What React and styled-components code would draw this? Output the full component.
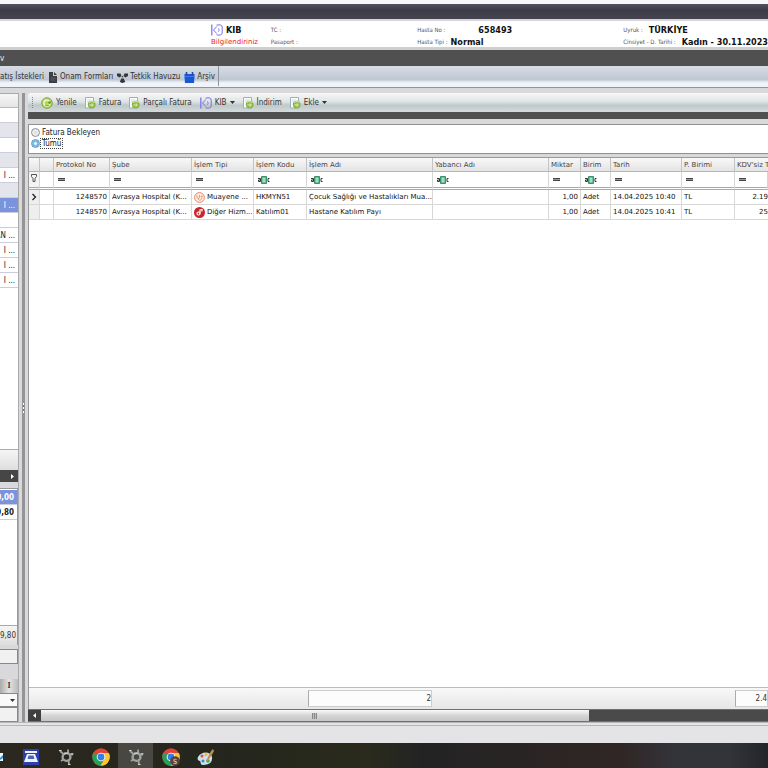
import React from "react";
import styled, { createGlobalStyle } from "styled-components";

const GlobalStyle = createGlobalStyle`
  * {
    box-sizing: border-box;
  }

  body {
    margin: 0;
    overflow-x: hidden;
    background: #e3e3e5;
    color: #333;
    font-family: "DejaVu Sans Condensed", "Noto Sans", sans-serif;
    font-size: 8px;
    line-height: 12px;
  }

  button,
  input,
  select {
    margin: 0;
    padding: 0;
    border: 0;
    background: none;
    color: inherit;
    font: inherit;
  }
`;

const Page = styled.div`
  display: flex;
  flex-direction: column;
  min-height: 100vh;
  overflow: hidden;
`;

const TitleBar = styled.div`
  height: 21px;
  border-top: 4px solid #f8f8fb;
  border-bottom: 2px solid #d8d3dd;
  background: linear-gradient(to bottom, #52525d, #3c3c48 40%, #45454f);
`;

const PatientBar = styled.header`
  display: grid;
  grid-template-columns: 60fr 147fr 207fr 143fr;
  height: 29px;
  padding: 3px 0 0 211px;
  overflow: hidden;
  background: #fff;
  border-bottom: 3px solid #cfcfcf;
`;

const PatientCell = styled.div`
  display: flex;
  flex-direction: column;
  white-space: nowrap;
`;

const PatientLine = styled.div`
  display: flex;
  align-items: center;
  gap: ${(props) => props.$gap || "3px"};
  height: 12px;
`;

const PatientLabel = styled.span`
  color: #555;
  font-size: 6px;
`;

const PatientValue = styled.strong`
  color: #111;
  font-size: 9px;
`;

const Notice = styled.span`
  color: #f0141e;
  font-family: "DejaVu Sans", sans-serif;
  font-size: 7px;
`;

const DarkBar = styled.div`
  height: 16px;
  background: #505050;
  color: #eee;
  line-height: 17px;
`;

const TabStrip = styled.nav`
  height: 22px;
  background: linear-gradient(to bottom, #d8dde4, #c0c7d2 65%, #f0f5fb 80%, #eef3f9);
  border-bottom: 1px solid #8f959d;
`;

const ToolButton = styled.button`
  display: flex;
  align-items: center;
  gap: 3px;
  white-space: nowrap;

  svg {
    flex: none;
  }
`;

const Tabs = styled.div`
  display: inline-flex;
  align-items: center;
  gap: 4px;
  height: 20px;
  padding: 2px 3px 0 0;
  border-right: 1px solid #8d939c;

  ${ToolButton} {
    gap: 2px;
  }
`;

const Body = styled.div`
  display: flex;
  flex: 1;
  padding-top: 5px;
  background: #d9d9db;
`;

const Side = styled.aside`
  display: flex;
  flex-direction: column;
  width: 19px;
  overflow: hidden;
  border-right: 1px solid #aaa;
`;

const SideHead = styled.div`
  height: 15px;
  background: linear-gradient(to bottom, #f7f7f7, #e4e4e4);
  border-top: 1px solid #aaa;
  border-bottom: 1px solid #bbb;
`;

const SideRow = styled.div`
  display: flex;
  justify-content: flex-end;
  height: 15px;
  overflow: hidden;
  background: ${(props) => props.$background || "#fff"};
  border-bottom: 1px solid #ccd;
  color: ${(props) => (props.$selected ? "#fff" : "#222")};
  font-weight: ${(props) => (props.$bold ? "bold" : "normal")};
  line-height: 15px;
  padding-right: 3px;
  white-space: nowrap;
`;

const SideList = styled.div`
  flex: 1;
  background: #fff;
`;

const SideFoot = styled.div`
  height: ${(props) => props.$height};
  background: linear-gradient(to bottom, #f5f5f5, #dedede);
  border-top: 1px solid #aaa;
  line-height: 20px;
  text-align: right;
  padding-right: 3px;
`;

const SideScroll = styled.button`
  display: flex;
  align-items: center;
  justify-content: flex-end;
  width: 100%;
  height: 12px;
  padding-right: 3px;
  background: #464646;
`;

const Totals = styled.div`
  height: 157px;
  margin-top: 6px;
  padding-top: 1px;
  border-top: 1px solid #999;
  border-right: 1px solid #999;
  background: #fff;
  display: flex;
  flex-direction: column;
`;

const SideBox = styled.div`
  height: 15px;
  border: solid #888;
  border-width: 1px 1px 1px 0;
  background: #f1f1f1;
`;

const SideForm = styled.div`
  padding-top: 4px;
`;

const SideButton = styled.button`
  display: block;
  width: 100%;
  height: 14px;
  margin-top: 15px;
  background: linear-gradient(to right, #aaa, #e4e4e4 50%, #bbb);
  font-family: "Liberation Serif", serif;
  font-weight: bold;
`;

const SideSelect = styled.select`
  display: block;
  appearance: none;
  width: 100%;
  height: 14px;
  border: solid #888;
  border-width: 1px 1px 1px 0;
  border-radius: 0;
  background: #fafafa;
`;

const SelectWrap = styled.div`
  position: relative;

  svg {
    position: absolute;
    right: 3px;
    top: 5px;
    pointer-events: none;
  }
`;

const Splitter = styled.div`
  display: flex;
  align-items: center;
  width: 3px;
  margin: 0 3px;
  background: #949496;

  &::after {
    content: "";
    width: 1px;
    height: 10px;
    margin: 0 1px;
    background: repeating-linear-gradient(to bottom, #fff 0 2px, #777 2px 4px);
  }
`;

const Main = styled.main`
  display: flex;
  flex: 1;
  flex-direction: column;
  min-width: 0;
`;

const Toolbar = styled.div`
  display: flex;
  align-items: center;
  gap: 8px;
  height: 19px;
  padding-left: 4px;
  border-radius: 3px 0 0 0;
  background: linear-gradient(to bottom, #f8f8f8, #dfe4e4 45%, #bfc9ca 65%, #d5dadb);
`;

const Grip = styled.div`
  width: 1px;
  height: 11px;
  border-left: 1px dotted #888;
`;

const Strip = styled.div`
  height: 7px;
  margin-bottom: 5px;
  background: #505050;
`;

const FilterBox = styled.fieldset`
  display: flex;
  flex-direction: column;
  margin: 0 0 3px;
  padding: 2px 2px 4px;
  border: solid #909090;
  border-width: 1px 0 1px 1px;
  background: #fff;
`;

const RadioLabel = styled.label`
  display: flex;
  align-items: center;
  height: 11px;
  color: #222;

  span {
    padding: 0 1px;
    border: 1px ${(props) => (props.$focused ? "dotted #444" : "solid transparent")};
    line-height: 9px;
  }
`;

const Radio = styled.input`
  appearance: none;
  width: 9px;
  height: 9px;
  border: 1px solid #8a8f93;
  border-radius: 50%;
  background: radial-gradient(#ddd, #fafafa);

  &:checked {
    border-color: #5b9bc8;
    background: radial-gradient(#f4fbff 15%, #70b6e2 45%, #b8e0f5);
  }
`;

const GridArea = styled.section`
  display: flex;
  flex: 1;
  flex-direction: column;
  overflow: hidden;
  border: solid #999;
  border-width: 1px 0 0 1px;
  background: #fff;
`;

const Table = styled.table`
  width: 100%;
  table-layout: fixed;
  border-collapse: separate;
  border-spacing: 0;
  font-family: "DejaVu Sans", sans-serif;
  font-size: 7px;
`;

const HeadCell = styled.th`
  height: 14px;
  padding: 0 0 0 2px;
  overflow: hidden;
  background: linear-gradient(to bottom, #f8f8f8, #e4e4e4);
  border-right: 1px solid #c4c4c4;
  border-bottom: 1px solid #b5b5b5;
  color: #444;
  font-weight: normal;
  text-align: left;
  white-space: nowrap;

  &:last-child {
    border-right: 0;
  }
`;

const FilterCell = styled.td`
  height: 18px;
  padding: 0 4px;
  border-right: 1px solid #d5d5d5;
  border-bottom: 3px double #aaa;

  &:first-child {
    padding: 0 2px;
    background: #f3f3f3;
  }

  button {
    display: flex;
  }
`;

const Cell = styled.td`
  height: 15px;
  padding: ${(props) => (props.$align === "right" ? "0 2px 0 0" : "0 0 0 2px")};
  overflow: hidden;
  border-right: 1px solid #d8d8d8;
  border-bottom: 1px solid #d8d8d8;
  color: #111;
  text-align: ${(props) => props.$align || "left"};
  white-space: nowrap;

  &:first-child {
    background: #eee;
  }

  &:last-child {
    padding: 0;
    border-right: 0;
  }

  svg {
    display: block;
    flex: none;
  }
`;

const TypeTag = styled.div`
  display: flex;
  align-items: center;
  gap: 2px;
`;

const Summary = styled.div`
  display: flex;
  height: 22px;
  margin-top: auto;
  padding: 2px 0;
  background: linear-gradient(to bottom, #f8f8f8, #e6e6e6);
  border-top: 1px solid #bbb;
`;

const SummaryBox = styled.output`
  width: ${(props) => props.$width};
  margin-left: ${(props) => props.$offset};
  border: 1px solid #ccc;
  border-left-color: #aaa;
  background: #fcfcfc;
  line-height: 16px;
  text-align: right;
`;

const ScrollBar = styled.div`
  display: flex;
  height: 13px;
  background: #4a4a4a;
  border: solid #70706e;
  border-width: 1px 0;
`;

const ScrollArrow = styled.button`
  display: flex;
  align-items: center;
  justify-content: center;
  width: 13px;
  background: #3f3f3f;
`;

const ScrollThumb = styled.div`
  display: flex;
  align-items: center;
  justify-content: center;
  width: 74%;
  background: linear-gradient(to bottom, #fafafa, #d5d5d5 50%, #c5c5c5);

  &::after {
    content: "";
    width: 5px;
    height: 6px;
    background: repeating-linear-gradient(to right, #888 0 1px, #bbb 1px 2px);
  }
`;

const StatusBar = styled.div`
  height: 21px;
  background: #e4e4e6;
  border-top: 4px double #b5b5b5;
`;

const Taskbar = styled.footer`
  display: flex;
  height: 25px;
  overflow: hidden;
  background: linear-gradient(to right, #2b281f, #24261d 30%, #2a2b1c 48%, #232324 55%, #302625 81%, #33343a 88%, #33343a 95%, #24252b);
`;

const TaskButton = styled.button`
  display: flex;
  align-items: center;
  justify-content: center;
  width: 35px;
  padding-top: 2px;
  background: ${(props) => (props.$active ? "#484741" : "none")};

  &:first-child {
    width: 13px;
    justify-content: flex-start;
  }
`;

const RefreshIcon = () => (
  <svg width="12" height="12" viewBox="0 0 12 12" fill="none">
    <circle cx="6" cy="6" r="5.3" fill="#b5d660" stroke="#86a83c" />
    <path d="M8.8 6.3a3 3 0 1 1-1-2.4" stroke="#f2fad8" strokeWidth="1.4" />
    <path d="M10.2 4.5 8.8 7.3 6.8 5z" fill="#5e8a22" />
    <path d="M4 7.8c1 1.3 3 1.3 4 .2" stroke="#5e8a22" strokeWidth=".8" />
  </svg>
);

const InvoiceIcon = () => (
  <svg width="11" height="12" viewBox="0 0 11 12" fill="none">
    <path d="M.5.5h8v10.5h-8z" fill="#fafcff" stroke="#9ab0bf" />
    <path d="M2 3h4M2 5h2" stroke="#c8d4dc" strokeWidth=".8" />
    <circle cx="6.7" cy="7.6" r="3.9" fill="#8db545" />
    <path d="M4 5.8c1.5-2 4-1.7 5.3 0" stroke="#c9e28c" strokeWidth="1.2" />
    <path d="M4.4 8h3.2M6.6 6.3l1.8 1.7-1.8 1.7" stroke="#eaf6c9" />
  </svg>
);

const KibIcon = () => (
  <svg width="12" height="12" viewBox="0 0 12 12" fill="none" stroke="#7770e8">
    <path d="M.8.5v11" strokeWidth="1.2" />
    <path d="M5.8 2.5 2.5 6l3.3 3.5" />
    <path d="M5.5 1.2c3.8-1 5.7 0 5.7 1.8v6c0 1.8-2 2.6-5.7 1.8" />
    <path d="M7 4.3c1.6.8 1.6 2.7 0 3.5" strokeWidth=".8" />
  </svg>
);

const FormIcon = () => (
  <svg width="10" height="11" viewBox="0 0 10 11" fill="#3c3f43">
    <path d="M1 0h4v4h4v7H1z" />
    <path d="M6 0l3 3H6z" />
    <path d="M2.5 6h5M2.5 8h5" stroke="#777" strokeWidth=".6" />
  </svg>
);

const PoolIcon = () => (
  <svg width="11" height="11" viewBox="0 0 11 11" fill="#34373b">
    <path d="M0 1.5h3.5l1 2.5-2 1.5L0 4zM11 1.5H7.5l-1 2.5 2 1.5L11 4z" />
    <path d="M4.3 6.5h2.4l1.6 3.5-2.8 1-2.8-1z" />
    <circle cx="5.5" cy="4.8" r=".8" />
  </svg>
);

const ArchiveIcon = () => (
  <svg width="11" height="11" viewBox="0 0 11 11">
    <path d="M.5 2h10v3l-.5 6H1L.5 5z" fill="#1957d6" />
    <path d="M2.5 0v3M8.5 0v3" stroke="#1748a6" strokeWidth="1.5" />
    <path d="M.5 4.5h10" stroke="#4f87f2" strokeWidth=".7" />
  </svg>
);

const Arrow = ({ direction, color = "#333" }) => {
  const paths = {
    down: "M0 1h5L2.5 4z",
    left: "M4 0v5L1 2.5z",
    right: "M1 0v5l3-2.5z",
  };
  return (
    <svg width="5" height="5" viewBox="0 0 5 5" fill={color}>
      <path d={paths[direction]} />
    </svg>
  );
};

const EqualsIcon = () => (
  <svg width="7" height="3" viewBox="0 0 7 3">
    <path d="M0 0h7v3H0z" fill="#999" />
    <path d="M0 .5h7M0 2.5h7" stroke="#444" />
  </svg>
);

const ContainsIcon = () => (
  <svg width="12" height="8" viewBox="0 0 12 8" fill="none">
    <path d="M0 2.5h2.5v3H.5V4h2M11.5 2.5H10v3h1.5" stroke="#333" />
    <path d="M3.5.5h5v7h-5z" fill="#54b88d" stroke="#38936d" />
    <path d="M5.2 2.2h1.6v3.6H5.2z" stroke="#d6f5e8" strokeWidth=".8" />
  </svg>
);

const FunnelIcon = () => (
  <svg width="6" height="8" viewBox="0 0 6 8" fill="none" stroke="#555">
    <path d="M.5.5h5v2L4 4.5v3H2v-3L.5 2.5z" />
  </svg>
);

const ExamIcon = () => (
  <svg width="11" height="11" viewBox="0 0 11 11" fill="none" stroke="#e8855d">
    <circle cx="5.5" cy="5.5" r="4.9" fill="#fff0e9" />
    <path d="M3 3v2c0 2 2.5 2 2.5 0V3M4.3 6.3c0 3 3.5 2.3 3.5-.7" strokeWidth=".8" />
    <circle cx="7.8" cy="4.5" r=".8" strokeWidth=".7" />
  </svg>
);

const OtherIcon = () => (
  <svg width="11" height="11" viewBox="0 0 11 11">
    <circle cx="5.5" cy="5.5" r="5.5" fill="#c9252d" />
    <circle cx="4.5" cy="6.5" r="1.5" fill="none" stroke="#fff" strokeWidth="1.2" />
    <path d="M6 6.5V3l2-.5v2" fill="none" stroke="#fff" strokeWidth="1.2" />
  </svg>
);

const MailIcon = () => (
  <svg width="4" height="10" viewBox="0 0 4 10">
    <path d="M0 1h3v8H0z" fill="#eaf6fc" />
    <path d="M0 6l3-3v3L0 8z" fill="#2694d2" />
  </svg>
);

const ScanIcon = () => (
  <svg width="18" height="18" viewBox="0 0 18 18">
    <path d="M1 1h16v16H1z" fill="#2b3fae" />
    <path d="M3 3h12v2H3zM5 6h8l3 8H2z" fill="#eef3ff" />
    <path d="M6.5 7.5h5l1 3.5h-7z" fill="#4565bd" />
  </svg>
);

const SatelliteIcon = () => (
  <svg width="16" height="18" viewBox="0 0 16 18" fill="none" stroke="#9fa4a2">
    <circle cx="8.5" cy="9" r="3.9" strokeWidth="2.4" />
    <path d="M2 3l4 3.5M10 1.5l.3 4M15 6.5h-4M11 16.5l-.5-4M3 13l3-2" strokeWidth="1.8" />
    <path d="M1 2.5h2.5M13 5.8h2.5M10 16.5h2.5M6 6l4-1" stroke="#d7d6c6" />
  </svg>
);

const ChromeIcon = ({ badge }) => (
  <svg width="18" height="18" viewBox="0 0 18 18">
    <circle cx="9" cy="9" r="8.7" fill="#e44234" />
    <path d="M1.5 4.6A8.7 8.7 0 0 0 8.5 17.7L12.5 11z" fill="#25a25a" />
    <path d="M16.8 5H9l3.5 6-4 6.7A8.7 8.7 0 0 0 16.8 5z" fill="#fbc82e" />
    <circle cx="9" cy="9" r="4.3" fill="#fff" />
    <circle cx="9" cy="9" r="3.4" fill="#347ee8" />
    {badge && (
      <>
        <circle cx="13" cy="13" r="4.8" fill="#5d4037" />
        <text x="13" y="15.5" fill="#eee" fontSize="7" textAnchor="middle">
          {badge}
        </text>
      </>
    )}
  </svg>
);

const PaintIcon = () => (
  <svg width="18" height="18" viewBox="0 0 18 18">
    <path d="M1 9c3-6 13-6 14 0 .7 6-4 8-9 8-3 0-2-3-3-4-2 0-3-2-2-4z" fill="#cfe0e8" />
    <circle cx="5" cy="8" r="1.5" fill="#dc5145" />
    <circle cx="9" cy="6.7" r="1.4" fill="#e9b639" />
    <circle cx="6" cy="13" r="1.5" fill="#338ed1" />
    <circle cx="11" cy="13" r="1.8" fill="#50a459" />
    <path d="M9 13l5-10 2-2 1 2-1 2-6 9z" fill="#c18d4d" />
  </svg>
);

const columns = [
  { title: "", width: "11px" },
  { title: "", width: "14px" },
  { title: "Protokol No", width: "56px", filter: "equals" },
  { title: "Şube", width: "82px", filter: "equals" },
  { title: "İşlem Tipi", width: "62px", filter: "equals" },
  { title: "İşlem Kodu", width: "53px", filter: "contains" },
  { title: "İşlem Adı", width: "126px", filter: "contains" },
  { title: "Yabancı Adı", width: "116px", filter: "contains" },
  { title: "Miktar", width: "32px", filter: "equals" },
  { title: "Birim", width: "30px", filter: "contains" },
  { title: "Tarih", width: "71px", filter: "equals" },
  { title: "P. Birimi", width: "53px", filter: "equals" },
  { title: "KDV'siz T", filter: "equals" },
];

const rows = [
  {
    icon: <ExamIcon />,
    type: "Muayene ...",
    code: "HKMYN51",
    name: "Çocuk Sağlığı ve Hastalıkları Mua...",
    date: "14.04.2025 10:40",
    amount: "2.19",
    current: true,
  },
  {
    icon: <OtherIcon />,
    type: "Diğer Hizm...",
    code: "Katılım01",
    name: "Hastane Katılım Payı",
    date: "14.04.2025 10:41",
    amount: "25",
  },
];

const sideRows = [
  { background: "#e4e4ec" },
  {},
  { background: "#e4e4ec" },
  { text: "I ..." },
  { background: "#e4e4ec" },
  { text: "I ...", background: "#7b93dd", selected: true },
  {},
  { text: "AN ..." },
  { text: "I ..." },
  { text: "I ..." },
  { text: "I ..." },
];

const PatientHeader = () => (
  <PatientBar>
    <PatientCell>
      <PatientLine>
        <KibIcon />
        <PatientValue>KIB</PatientValue>
      </PatientLine>
      <PatientLine>
        <Notice>Bilgilendiriniz</Notice>
      </PatientLine>
    </PatientCell>
    <PatientCell>
      <PatientLine>
        <PatientLabel>TC :</PatientLabel>
      </PatientLine>
      <PatientLine>
        <PatientLabel>Pasaport :</PatientLabel>
      </PatientLine>
    </PatientCell>
    <PatientCell>
      <PatientLine $gap="33px">
        <PatientLabel>Hasta No :</PatientLabel>
        <PatientValue>658493</PatientValue>
      </PatientLine>
      <PatientLine>
        <PatientLabel>Hasta Tipi :</PatientLabel>
        <PatientValue>Normal</PatientValue>
      </PatientLine>
    </PatientCell>
    <PatientCell>
      <PatientLine $gap="6px">
        <PatientLabel>Uyruk :</PatientLabel>
        <PatientValue>TÜRKİYE</PatientValue>
      </PatientLine>
      <PatientLine $gap="6px">
        <PatientLabel>Cinsiyet - D. Tarihi :</PatientLabel>
        <PatientValue>Kadın - 30.11.2023</PatientValue>
      </PatientLine>
    </PatientCell>
  </PatientBar>
);

const SidePanel = () => (
  <Side>
    <SideHead />
    <SideRow />
    <SideList>
      {sideRows.map((row, index) => (
        <SideRow key={index} $background={row.background} $selected={row.selected}>
          {row.text}
        </SideRow>
      ))}
    </SideList>
    <SideFoot $height="21px" />
    <SideScroll aria-label="Sağa kaydır">
      <Arrow direction="right" color="#fff" />
    </SideScroll>
    <Totals>
      <SideRow $background="#7b93dd" $selected $bold>
        0,00
      </SideRow>
      <SideRow $bold>9,80</SideRow>
      <SideList />
      <SideFoot $height="20px">9,80</SideFoot>
    </Totals>
    <SideForm>
      <SideBox />
      <SideButton>I</SideButton>
      <SelectWrap>
        <SideSelect aria-label="Seçim" />
        <Arrow direction="down" />
      </SelectWrap>
      <SideBox />
    </SideForm>
  </Side>
);

const ServiceTable = () => (
  <Table>
    <colgroup>
      {columns.map((column, index) => (
        <col key={index} width={column.width} />
      ))}
    </colgroup>
    <thead>
      <tr>
        {columns.map((column, index) => (
          <HeadCell key={index}>{column.title}</HeadCell>
        ))}
      </tr>
    </thead>
    <tbody>
      <tr>
        {columns.map((column, index) => (
          <FilterCell key={index}>
            {index === 0 && <FunnelIcon />}
            {column.filter && (
              <button aria-label={column.title}>
                {column.filter === "equals" ? <EqualsIcon /> : <ContainsIcon />}
              </button>
            )}
          </FilterCell>
        ))}
      </tr>
      {rows.map((row) => (
        <tr key={row.code}>
          <Cell>
            {row.current && (
              <svg width="6" height="8" viewBox="0 0 6 8" fill="none" stroke="#222">
                <path d="M1.5 1l3 3-3 3" strokeWidth="1.3" />
              </svg>
            )}
          </Cell>
          <Cell />
          <Cell $align="right">1248570</Cell>
          <Cell>Avrasya Hospital (K...</Cell>
          <Cell>
            <TypeTag>
              {row.icon}
              {row.type}
            </TypeTag>
          </Cell>
          <Cell>{row.code}</Cell>
          <Cell>{row.name}</Cell>
          <Cell />
          <Cell $align="right">1,00</Cell>
          <Cell>Adet</Cell>
          <Cell>{row.date}</Cell>
          <Cell>TL</Cell>
          <Cell $align="right">{row.amount}</Cell>
        </tr>
      ))}
    </tbody>
  </Table>
);

const App = () => {
  return (
    <Page>
      <GlobalStyle />
      <TitleBar />
      <PatientHeader />
      <DarkBar>v</DarkBar>
      <TabStrip>
        <Tabs>
          <ToolButton>atış İstekleri</ToolButton>
          <ToolButton>
            <FormIcon />
            Onam Formları
          </ToolButton>
          <ToolButton>
            <PoolIcon />
            Tetkik Havuzu
          </ToolButton>
          <ToolButton>
            <ArchiveIcon />
            Arşiv
          </ToolButton>
        </Tabs>
      </TabStrip>
      <Body>
        <SidePanel />
        <Splitter />
        <Main>
          <Toolbar>
            <Grip />
            <ToolButton>
              <RefreshIcon />
              Yenile
            </ToolButton>
            <ToolButton>
              <InvoiceIcon />
              Fatura
            </ToolButton>
            <ToolButton>
              <InvoiceIcon />
              Parçalı Fatura
            </ToolButton>
            <ToolButton>
              <KibIcon />
              KIB
              <Arrow direction="down" />
            </ToolButton>
            <ToolButton>
              <InvoiceIcon />
              İndirim
            </ToolButton>
            <ToolButton>
              <InvoiceIcon />
              Ekle
              <Arrow direction="down" />
            </ToolButton>
          </Toolbar>
          <Strip />
          <FilterBox>
            <RadioLabel>
              <Radio type="radio" name="scope" />
              <span>Fatura Bekleyen</span>
            </RadioLabel>
            <RadioLabel $focused>
              <Radio type="radio" name="scope" defaultChecked />
              <span>Tümü</span>
            </RadioLabel>
          </FilterBox>
          <GridArea>
            <ServiceTable />
            <Summary>
              <SummaryBox $width="124px" $offset="279px">
                2
              </SummaryBox>
              <SummaryBox $width="33px" $offset="auto">
                2.4
              </SummaryBox>
            </Summary>
          </GridArea>
          <ScrollBar>
            <ScrollArrow aria-label="Sola kaydır">
              <Arrow direction="left" color="#fff" />
            </ScrollArrow>
            <ScrollThumb />
          </ScrollBar>
        </Main>
      </Body>
      <StatusBar />
      <Taskbar>
        <TaskButton aria-label="Posta">
          <MailIcon />
        </TaskButton>
        <TaskButton aria-label="Tarayıcı">
          <ScanIcon />
        </TaskButton>
        <TaskButton aria-label="Hastane">
          <SatelliteIcon />
        </TaskButton>
        <TaskButton aria-label="Chrome">
          <ChromeIcon />
        </TaskButton>
        <TaskButton $active aria-label="Hastane 2">
          <SatelliteIcon />
        </TaskButton>
        <TaskButton aria-label="Chrome S">
          <ChromeIcon badge="S" />
        </TaskButton>
        <TaskButton aria-label="Paint">
          <PaintIcon />
        </TaskButton>
      </Taskbar>
    </Page>
  );
};

export default App;
